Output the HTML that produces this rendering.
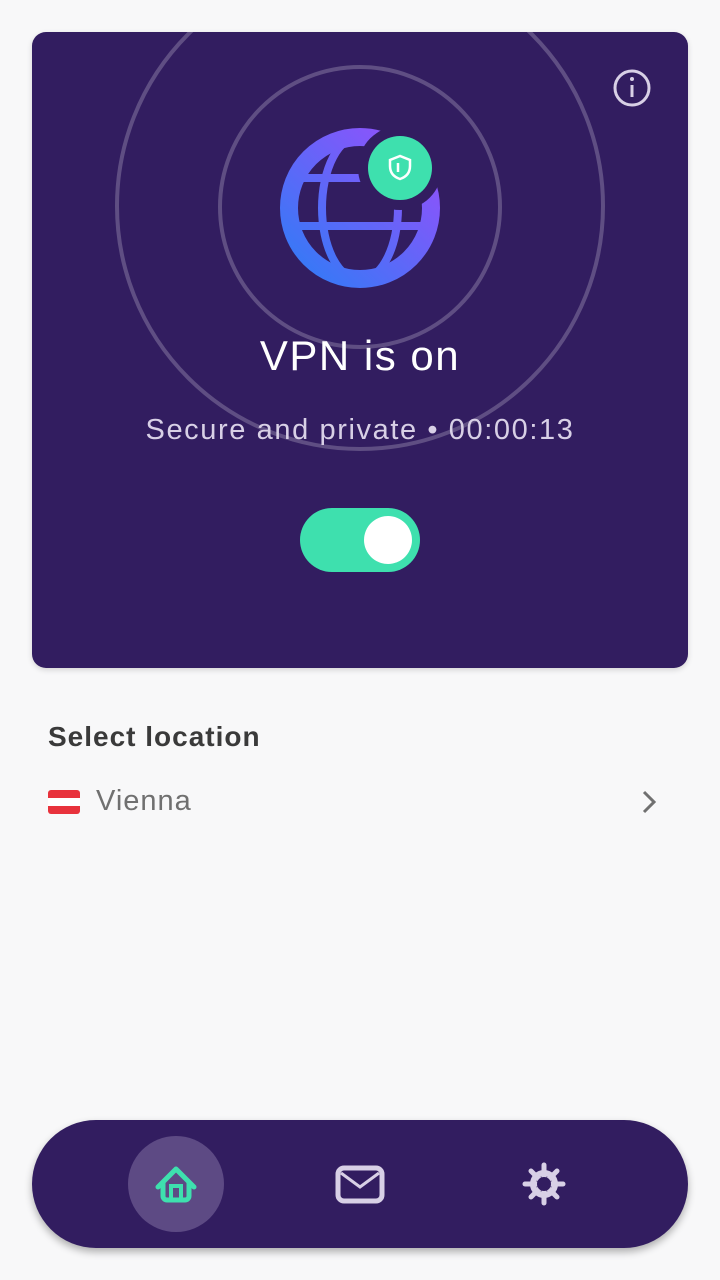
<!DOCTYPE html>
<html><head><meta charset="utf-8"><style>
*{margin:0;padding:0;box-sizing:border-box}
body{width:720px;height:1280px;background:#f8f8f9;font-family:"Liberation Sans",sans-serif;position:relative;overflow:hidden}
.card{position:absolute;left:32px;top:32px;width:656px;height:636px;background:#321d60;border-radius:14px;overflow:hidden;box-shadow:0 2px 6px rgba(0,0,0,.15)}
.c{position:absolute;border-radius:50%;border:4px solid rgba(255,255,255,.22)}
.t1{position:absolute;top:300px;width:100%;text-align:center;color:#fff;font-size:42px;letter-spacing:1.5px}
.t2{position:absolute;top:382px;width:100%;text-align:center;color:#d8d0e6;font-size:29px;letter-spacing:1.6px}
.tog{position:absolute;left:268px;top:476px;width:120px;height:64px;border-radius:32px;background:#3ee0ae}
.tog::after{content:"";position:absolute;right:8px;top:8px;width:48px;height:48px;border-radius:50%;background:#fff}
.sel{position:absolute;left:48px;top:721px;font-size:28px;font-weight:bold;color:#3a3a3a;letter-spacing:1px}
.loc{position:absolute;left:96px;top:785px;font-size:29px;color:#707070;letter-spacing:1px}
.nav{position:absolute;left:32px;top:1120px;width:656px;height:128px;border-radius:64px;background:#321d60;box-shadow:0 4px 8px rgba(0,0,0,.3)}
</style></head><body>
<div class="card">
 <div class="c" style="left:83px;top:-71px;width:490px;height:490px"></div>
 <div class="c" style="left:186px;top:33px;width:284px;height:284px"></div>
 <svg style="position:absolute;left:0;top:0" width="656" height="636">
  <defs><linearGradient id="g" gradientUnits="userSpaceOnUse" x1="260" y1="250" x2="400" y2="100"><stop offset="0" stop-color="#2f7cf6"/><stop offset="1" stop-color="#9b4dfb"/></linearGradient>
  <clipPath id="cp"><circle cx="328" cy="176" r="75"/></clipPath>
  <mask id="m"><rect width="656" height="636" fill="#fff"/><circle cx="368" cy="136" r="42" fill="#000"/></mask></defs>
  <g mask="url(#m)" fill="none" stroke="url(#g)">
   <circle cx="328" cy="176" r="71" stroke-width="18"/>
   <g clip-path="url(#cp)">
   <ellipse cx="328" cy="176" rx="38" ry="72" stroke-width="8"/>
   <line x1="250" y1="146" x2="410" y2="146" stroke-width="8"/>
   <line x1="250" y1="194" x2="410" y2="194" stroke-width="8"/>
   </g>
  </g>
  <circle cx="368" cy="136" r="32" fill="#3ee0ae"/>
  <path d="M368 124 l-10 4 v6 c0 7 4 11 10 13 c6-2 10-6 10-13 v-6 z" fill="none" stroke="#fff" stroke-width="2.5"/>
  <line x1="366" y1="131" x2="366" y2="140" stroke="#fff" stroke-width="2.5"/>
  <circle cx="600" cy="56" r="17" fill="none" stroke="#d8d0e6" stroke-width="3"/>
  <line x1="600" y1="53" x2="600" y2="65" stroke="#d8d0e6" stroke-width="3"/>
  <circle cx="600" cy="47" r="2" fill="#d8d0e6"/>
 </svg>
 <div class="t1">VPN is on</div>
 <div class="t2">Secure and private • 00:00:13</div>
 <div class="tog"></div>
</div>
<div class="sel">Select location</div>
<div style="position:absolute;left:48px;top:790px;width:32px;height:24px;border-radius:3px;background:linear-gradient(#e8323c 0 33%,#fff 33% 66%,#e8323c 66%)"></div>
<div class="loc">Vienna</div>
<svg style="position:absolute;left:636px;top:788px" width="28" height="28"><path d="M8 4 l10 10 -10 10" fill="none" stroke="#707070" stroke-width="3"/></svg>
<div class="nav">
 <div style="position:absolute;left:96px;top:16px;width:96px;height:96px;border-radius:50%;background:#5d4a84"></div>
 <svg style="position:absolute;left:0;top:0" width="656" height="128">
  <path d="M126 67 l18-18 18 18 M131 62 v14 a4 4 0 0 0 4 4 h18 a4 4 0 0 0 4-4 v-14" fill="none" stroke="#3ee0ae" stroke-width="5" stroke-linecap="round" stroke-linejoin="round"/>
  <rect x="139" y="66" width="10" height="14" fill="none" stroke="#3ee0ae" stroke-width="4"/>
  <rect x="306" y="48" width="44" height="33" rx="6" fill="none" stroke="#d8d0e6" stroke-width="5"/>
  <path d="M309 53 l19 14 19-14" fill="none" stroke="#d8d0e6" stroke-width="3"/>
  <circle cx="512" cy="64" r="11" fill="none" stroke="#d8d0e6" stroke-width="6"/>
  <g stroke="#d8d0e6" stroke-width="5" stroke-linecap="round">
   <line x1="512" y1="45" x2="512" y2="83"/><line x1="493" y1="64" x2="531" y2="64"/>
   <line x1="499" y1="51" x2="525" y2="77"/><line x1="525" y1="51" x2="499" y2="77"/>
  </g>
  <circle cx="512" cy="64" r="7" fill="#321d60"/>
 </svg>
</div>
</body></html>
